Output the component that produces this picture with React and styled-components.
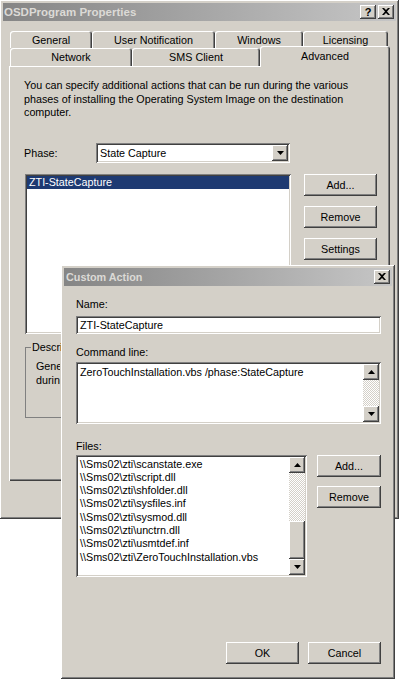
import styled, { createGlobalStyle, css } from 'styled-components';

const FACE = '#d4d0c8';

const raised = css`
    background-color: ${FACE};
    box-shadow: inset -1px -1px #404040, inset 1px 1px #ffffff, inset -2px -2px #808080, inset 2px 2px ${FACE};
`;

const sunken = css`
    background-color: #ffffff;
    box-shadow: inset 1px 1px #808080, inset -1px -1px #ffffff, inset 2px 2px #404040, inset -2px -2px ${FACE};
`;

const GlobalStyle = createGlobalStyle`
    html, body {
        margin: 0;
        padding: 0;
        background: #ffffff;
    }
    body {
        font-family: "Liberation Sans", Arial, sans-serif;
        font-size: 10.75px;
        color: #000000;
    }
    * {
        box-sizing: border-box;
    }
`;

const Desktop = styled.div`
    position: relative;
    width: 400px;
    height: 679px;
    overflow: hidden;
    background: #ffffff;
`;

const Window = styled.div`
    ${raised};
    display: flex;
    flex-direction: column;
    width: ${(p) => p.$width}px;
    height: ${(p) => p.$height}px;
    padding: 3px;
`;

const DialogWindow = styled(Window)`
    position: absolute;
    left: 61px;
    top: 265px;
`;

const TitleBar = styled.div`
    display: flex;
    align-items: center;
    justify-content: space-between;
    height: 18px;
    padding: 0 2px 0 ${(p) => p.$indent}px;
    background: linear-gradient(to right, #858585, #c6c6c6);
    color: #dcdad6;
    font-weight: bold;
    font-size: ${(p) => p.$size}px;
    white-space: nowrap;
`;

const CaptionButtons = styled.div`
    display: flex;
    gap: 2px;
`;

const CaptionButton = styled.div`
    ${raised};
    width: 16px;
    height: 14px;
    display: flex;
    align-items: center;
    justify-content: center;
    color: #000000;
    font-size: 11px;
    font-weight: bold;
    padding-bottom: 1px;
`;

const TabStrip = styled.div`
    display: flex;
    flex-direction: column;
    padding: 10px 0 0 7px;
`;

const TabRow = styled.div`
    display: flex;
    align-items: flex-end;
    height: ${(p) => p.$height}px;
`;

const Tab = styled.div`
    position: relative;
    z-index: ${(p) => (p.$active ? 2 : 0)};
    width: ${(p) => p.$width}px;
    height: ${(p) => (p.$active ? '21px' : '100%')};
    margin-bottom: ${(p) => (p.$active ? -1 : 0)}px;
    padding-bottom: ${(p) => (p.$active ? 2 : 0)}px;
    display: flex;
    align-items: center;
    justify-content: center;
    background: ${FACE};
    border-radius: 3px 3px 0 0;
    box-shadow: inset 1px 1px #ffffff, inset -1px 0 #404040, inset -2px 0 #808080;
    white-space: nowrap;
`;

const TabPanel = styled.div`
    display: flex;
    flex-direction: column;
    margin-left: 6px;
    width: 381px;
    height: 415px;
    padding: 13px 0 0 15px;
    background: ${FACE};
    box-shadow: inset 1px 1px #ffffff, inset -1px -1px #404040, inset -2px -2px #808080;
`;

const Intro = styled.p`
    margin: 0;
    line-height: 13.5px;
    white-space: nowrap;
`;

const PhaseRow = styled.div`
    display: flex;
    align-items: center;
    margin-top: 23.5px;
`;

const PhaseLabel = styled.span`
    width: 72px;
`;

const ComboBox = styled.div`
    ${sunken};
    display: flex;
    align-items: center;
    width: 194px;
    height: 20px;
    padding: 2px;
`;

const ComboText = styled.span`
    flex: 1;
    padding-left: 2px;
`;

const SmallButton = styled.div`
    ${raised};
    width: 16px;
    height: 16px;
    display: flex;
    align-items: center;
    justify-content: center;
    flex-shrink: 0;
`;

const ListRow = styled.div`
    display: flex;
    gap: 13px;
    margin-top: 11px;
    margin-left: 1px;
`;

const ListBox = styled.div`
    ${sunken};
    width: ${(p) => p.$width}px;
    height: ${(p) => p.$height}px;
    padding: 2px;
`;

const ListItem = styled.div`
    height: 13.3px;
    line-height: 13.3px;
    padding-left: 2px;
    white-space: nowrap;
    color: ${(p) => (p.$selected ? '#ffffff' : '#000000')};
    background: ${(p) => (p.$selected ? '#1e3a72' : 'transparent')};
`;

const ButtonColumn = styled.div`
    display: flex;
    flex-direction: column;
    gap: ${(p) => p.$gap}px;
`;

const PushButton = styled.div`
    ${raised};
    width: ${(p) => p.$width}px;
    height: 22px;
    display: flex;
    align-items: center;
    justify-content: center;
`;

const GroupBox = styled.fieldset`
    margin: 7px 0 0 1px;
    width: 352px;
    height: 77px;
    padding: 5px 10px;
    border: 1px solid #808080;
    line-height: 14px;
    white-space: nowrap;

    legend {
        margin-left: -5px;
        padding: 0 1px;
        line-height: 13px;
    }
`;

/* the dialog hides the rest of these words */
const Clip = styled.span`
    display: block;
    width: ${(p) => p.$width}px;
    overflow: hidden;
    white-space: nowrap;
`;

const DialogBody = styled.div`
    flex: 1;
    display: flex;
    flex-direction: column;
    padding: 12px 11px 12px 12px;
`;

const FieldLabel = styled.div`
    line-height: 13px;
    margin-top: ${(p) => p.$top || 0}px;
    margin-bottom: ${(p) => p.$gap}px;
`;

const TextInput = styled.div`
    ${sunken};
    height: 18px;
    line-height: 18px;
    padding: 0 4px;
`;

const TextArea = styled.div`
    ${sunken};
    display: flex;
    height: 62px;
    padding: 2px;
`;

const TextContent = styled.div`
    flex: 1;
    padding: 2px 0 0 2px;
    line-height: 13px;
    white-space: nowrap;
`;

const ScrollBar = styled.div`
    display: flex;
    flex-direction: column;
    width: 16px;
    height: 100%;
`;

const Track = styled.div`
    flex: 1;
    display: flex;
    flex-direction: column;
    justify-content: flex-end;
    background: repeating-conic-gradient(${FACE} 0 25%, #ffffff 0 50%) 0 0 / 2px 2px;
`;

const Thumb = styled.div`
    ${raised};
    flex-shrink: 0;
    height: ${(p) => p.$height}px;
`;

const FilesRow = styled.div`
    display: flex;
    gap: 10px;
`;

const FilesBox = styled(ListBox)`
    display: flex;
`;

const FilesItems = styled.div`
    flex: 1;
    padding-top: 0.5px;
`;

const Footer = styled.div`
    display: flex;
    justify-content: flex-end;
    gap: 9px;
    margin-top: auto;
`;

function Arrow({ dir }) {
    const points = dir === 'up' ? '0,4 7,4 3.5,0' : '0,0 7,0 3.5,4';
    return (
        <svg width="7" height="4" viewBox="0 0 7 4" style={{ display: 'block' }}>
            <polygon points={points} fill="#000000" />
        </svg>
    );
}

function CloseGlyph() {
    return (
        <svg width="8" height="7" viewBox="0 0 8 7" style={{ display: 'block' }}>
            <path d="M0 0 H2 L4 2 L6 0 H8 L5 3.5 L8 7 H6 L4 5 L2 7 H0 L3 3.5 Z" fill="#000000" />
        </svg>
    );
}

function VScroll({ thumb }) {
    return (
        <ScrollBar>
            <SmallButton><Arrow dir="up" /></SmallButton>
            <Track>{thumb ? <Thumb $height={thumb} /> : null}</Track>
            <SmallButton><Arrow dir="down" /></SmallButton>
        </ScrollBar>
    );
}

const files = [
    '\\\\Sms02\\zti\\scanstate.exe',
    '\\\\Sms02\\zti\\script.dll',
    '\\\\Sms02\\zti\\shfolder.dll',
    '\\\\Sms02\\zti\\sysfiles.inf',
    '\\\\Sms02\\zti\\sysmod.dll',
    '\\\\Sms02\\zti\\unctrn.dll',
    '\\\\Sms02\\zti\\usmtdef.inf',
    '\\\\Sms02\\zti\\ZeroTouchInstallation.vbs',
];

export default function App() {
    return (
        <Desktop>
            <GlobalStyle />
            <Window $width={399} $height={519}>
                <TitleBar $indent={1} $size={11.5}>
                    <span>OSDProgram Properties</span>
                    <CaptionButtons>
                        <CaptionButton>?</CaptionButton>
                        <CaptionButton><CloseGlyph /></CaptionButton>
                    </CaptionButtons>
                </TitleBar>
                <TabStrip>
                    <TabRow $height={17}>
                        <Tab $width={82}>General</Tab>
                        <Tab $width={123}>User Notification</Tab>
                        <Tab $width={88}>Windows</Tab>
                        <Tab $width={85}>Licensing</Tab>
                    </TabRow>
                    <TabRow $height={18}>
                        <Tab $width={122}>Network</Tab>
                        <Tab $width={128}>SMS Client</Tab>
                        <Tab $width={130} $active>Advanced</Tab>
                    </TabRow>
                </TabStrip>
                <TabPanel>
                    <Intro>
                        You can specify additional actions that can be run during the various
                        <br />
                        phases of installing the Operating System Image on the destination
                        <br />
                        computer.
                    </Intro>
                    <PhaseRow>
                        <PhaseLabel>Phase:</PhaseLabel>
                        <ComboBox>
                            <ComboText>State Capture</ComboText>
                            <SmallButton><Arrow dir="down" /></SmallButton>
                        </ComboBox>
                    </PhaseRow>
                    <ListRow>
                        <ListBox $width={266} $height={160}>
                            <ListItem $selected>ZTI-StateCapture</ListItem>
                        </ListBox>
                        <ButtonColumn $gap={10}>
                            <PushButton $width={73}>Add...</PushButton>
                            <PushButton $width={73}>Remove</PushButton>
                            <PushButton $width={73}>Settings</PushButton>
                        </ButtonColumn>
                    </ListRow>
                    <GroupBox>
                        <legend><Clip $width={29}>Description</Clip></legend>
                        <Clip $width={24}>General</Clip>
                        <Clip $width={24}>during</Clip>
                    </GroupBox>
                </TabPanel>
            </Window>

            <DialogWindow $width={334} $height={414}>
                <TitleBar $indent={2} $size={10.8}>
                    <span>Custom Action</span>
                    <CaptionButton><CloseGlyph /></CaptionButton>
                </TitleBar>
                <DialogBody>
                    <FieldLabel $gap={5}>Name:</FieldLabel>
                    <TextInput>ZTI-StateCapture</TextInput>
                    <FieldLabel $top={12} $gap={3}>Command line:</FieldLabel>
                    <TextArea>
                        <TextContent>ZeroTouchInstallation.vbs /phase:StateCapture</TextContent>
                        <VScroll />
                    </TextArea>
                    <FieldLabel $top={16} $gap={2}>Files:</FieldLabel>
                    <FilesRow>
                        <FilesBox $width={231} $height={122}>
                            <FilesItems>
                                {files.map((f) => (
                                    <ListItem key={f}>{f}</ListItem>
                                ))}
                            </FilesItems>
                            <VScroll thumb={38} />
                        </FilesBox>
                        <ButtonColumn $gap={9}>
                            <PushButton $width={64}>Add...</PushButton>
                            <PushButton $width={64}>Remove</PushButton>
                        </ButtonColumn>
                    </FilesRow>
                    <Footer>
                        <PushButton $width={73}>OK</PushButton>
                        <PushButton $width={73}>Cancel</PushButton>
                    </Footer>
                </DialogBody>
            </DialogWindow>
        </Desktop>
    );
}
